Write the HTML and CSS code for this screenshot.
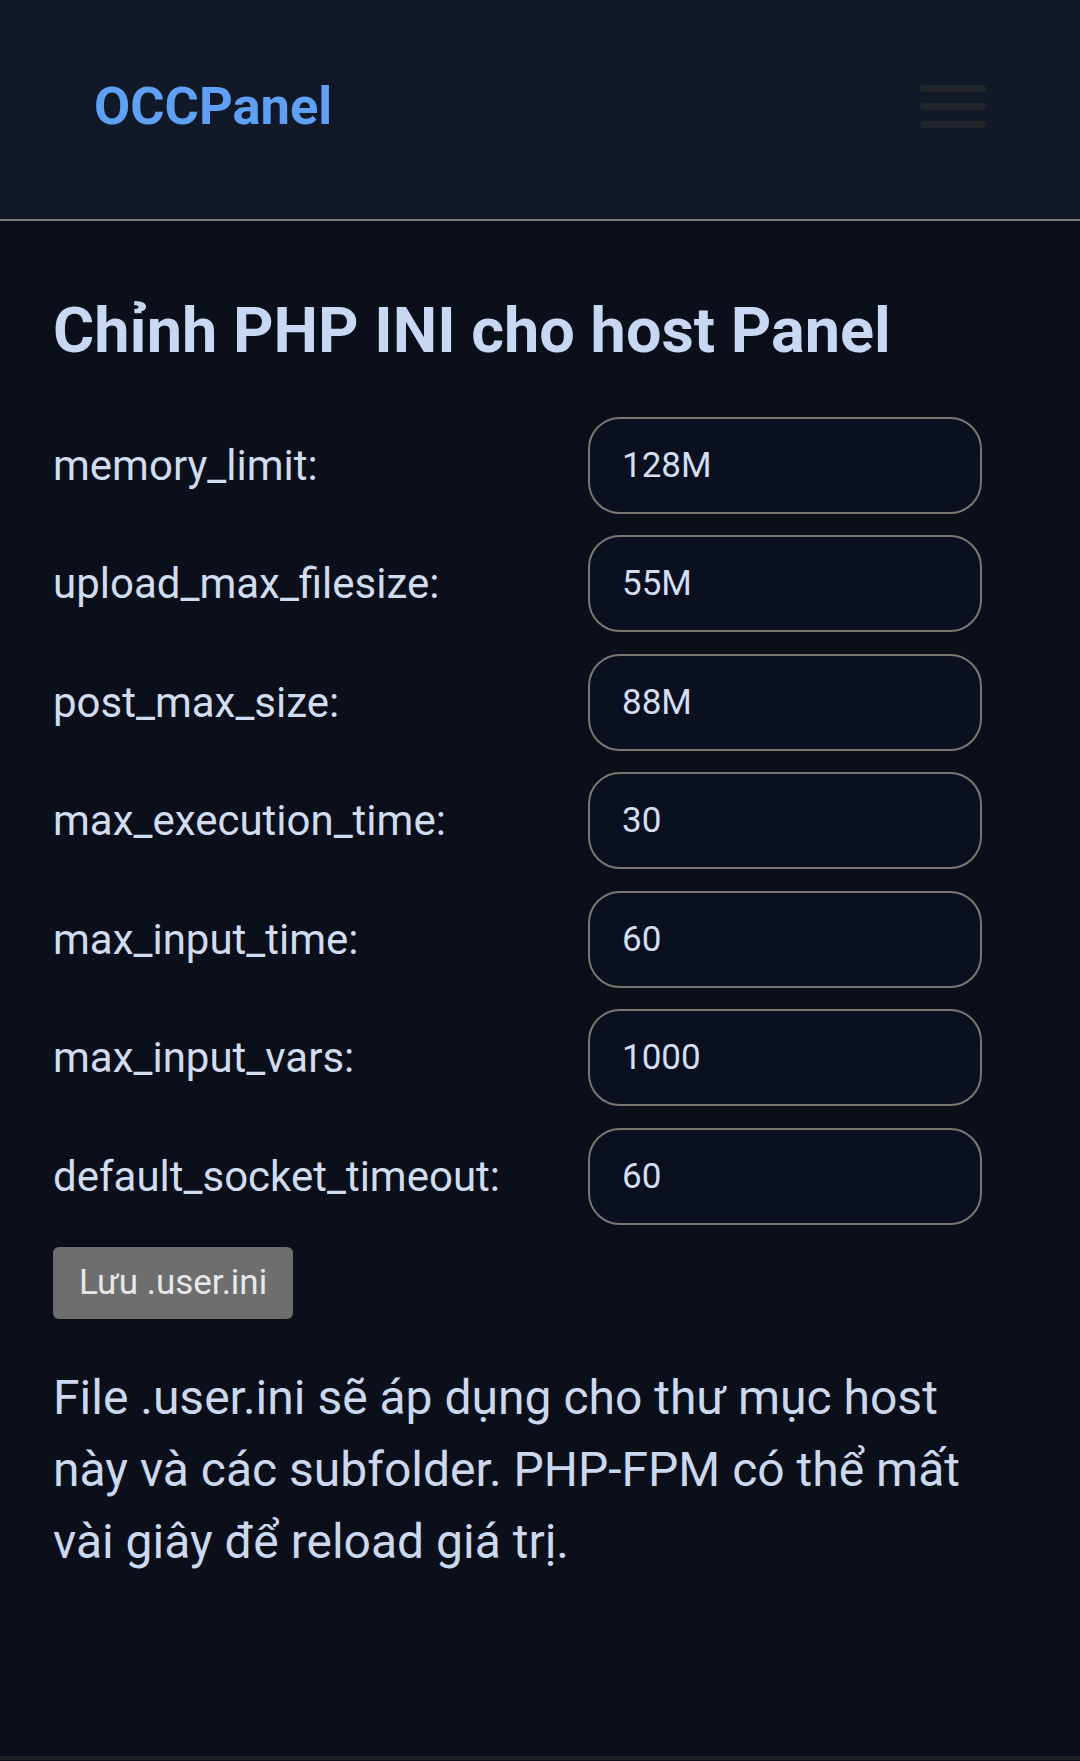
FILE: index.html
```html
<!DOCTYPE html>
<html lang="vi">
<head>
<meta charset="utf-8">
<title>OCCPanel - PHP INI</title>
<link rel="stylesheet" href="styles.css">
</head>
<body>
<header class="topbar">
  <div class="logo">OCCPanel</div>
  <div class="burger" aria-label="menu">
    <span class="bar"></span>
    <span class="bar"></span>
    <span class="bar"></span>
  </div>
</header>
<main class="content">
  <h2 class="title">Chỉnh PHP INI cho host Panel</h2>
  <form class="ini-form">
    <label class="label">memory_limit:</label>
    <input class="field" type="text" value="128M">
    <label class="label">upload_max_filesize:</label>
    <input class="field" type="text" value="55M">
    <label class="label">post_max_size:</label>
    <input class="field" type="text" value="88M">
    <label class="label">max_execution_time:</label>
    <input class="field" type="text" value="30">
    <label class="label">max_input_time:</label>
    <input class="field" type="text" value="60">
    <label class="label">max_input_vars:</label>
    <input class="field" type="text" value="1000">
    <label class="label">default_socket_timeout:</label>
    <input class="field" type="text" value="60">
  </form>
  <button class="save" type="button">Lưu .user.ini</button>
  <p class="note">File .user.ini sẽ áp dụng cho thư mục host này và các subfolder. PHP-FPM có thể mất vài giây để reload giá trị.</p>
</main>
<footer class="footer"></footer>
</body>
</html>
```
FILE: styles.css
```css
* { box-sizing: border-box; }
html, body { margin: 0; padding: 0; }
body {
  background: #0b0f19;
  font-family: Roboto, "Noto Sans", "Liberation Sans", sans-serif;
  color: #cfdaee;
  min-height: 1761px;
}
.topbar {
  height: 221px;
  background: #111827;
  border-bottom: 2px solid #7b7b7b;
  display: flex;
  align-items: center;
  justify-content: space-between;
  padding: 0 94px 6px 94px;
}
.logo {
  font-size: 52.5px;
  font-weight: 700;
  color: #5fa0f5;
  line-height: 1.172;
}
.burger {
  width: 66px;
  display: flex;
  flex-direction: column;
  gap: 11px;
}
.bar {
  display: block;
  height: 7px;
  border-radius: 4px;
  background: #212429;
}
.content {
  padding: 0 53px;
}
.title {
  margin: 73px 0 49px;
  font-size: 63px;
  font-weight: 700;
  line-height: 1.172;
  color: #c8d8f3;
}
.ini-form {
  display: grid;
  grid-template-columns: 535px 394px;
  row-gap: 21.5px;
  align-items: center;
}
.label {
  font-size: 42px;
  line-height: 1.172;
  color: #d0dcf0;
}
.field {
  height: 97px;
  width: 394px;
  border: 2.5px solid #7c776e;
  border-radius: 32px;
  background: #0a1020;
  color: #d3def2;
  font-family: Roboto, "Noto Sans", sans-serif;
  font-size: 35px;
  padding: 0 30px 0 32px;
  outline: none;
}
.save {
  display: block;
  margin-top: 22px;
  height: 72px;
  padding: 0 26px;
  border: none;
  border-radius: 6px;
  background: #6e6e6e;
  color: #e6e8ea;
  font-family: Roboto, "Noto Sans", sans-serif;
  font-size: 35px;
}
.note {
  margin: 43px 0 0;
  max-width: 940px;
  font-size: 48px;
  line-height: 72px;
  color: #cbd8ef;
}
.footer {
  margin-top: 178px;
  height: 10px;
  border-top: 4px solid #1e2126;
  background: #0b0f19;
}
```
